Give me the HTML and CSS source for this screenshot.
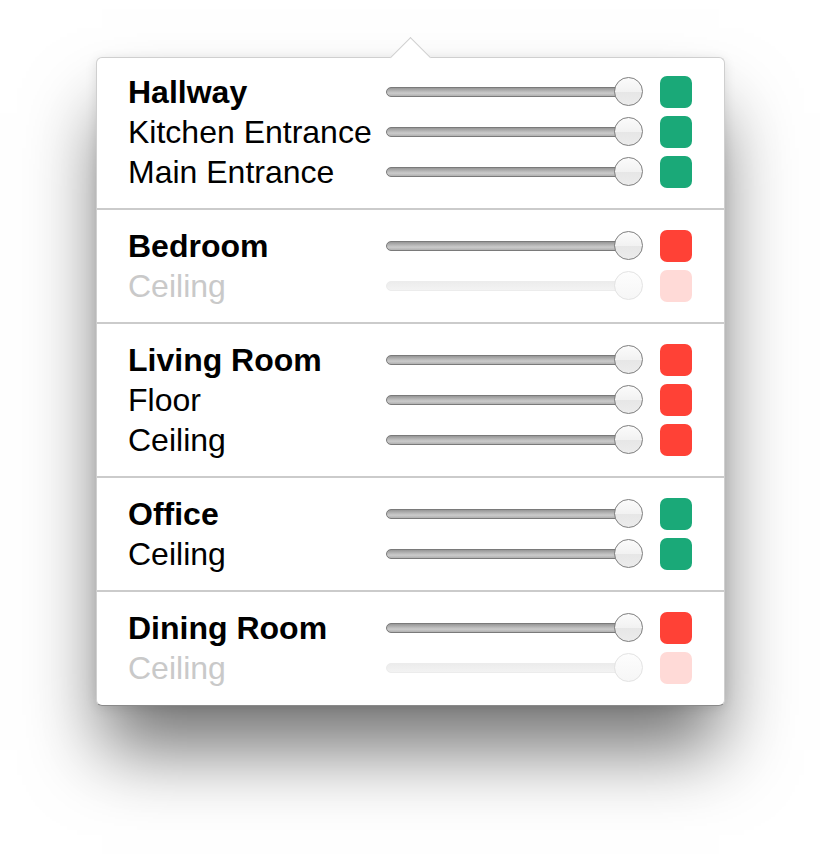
FILE: index.html
```html
<!DOCTYPE html>
<html>
<head>
<meta charset="utf-8">
<link rel="stylesheet" href="styles.css">
</head>
<body>
<div class="popover">
  <div class="section top">
    <div class="row"><span class="label bold">Hallway</span><div class="slider"><div class="track"></div><div class="knob"></div></div><div class="swatch green"></div></div>
    <div class="row"><span class="label">Kitchen Entrance</span><div class="slider"><div class="track"></div><div class="knob"></div></div><div class="swatch green"></div></div>
    <div class="row"><span class="label">Main Entrance</span><div class="slider"><div class="track"></div><div class="knob"></div></div><div class="swatch green"></div></div>
  </div>
  <div class="section">
    <div class="row"><span class="label bold">Bedroom</span><div class="slider"><div class="track"></div><div class="knob"></div></div><div class="swatch red"></div></div>
    <div class="row disabled"><span class="label">Ceiling</span><div class="slider"><div class="track"></div><div class="knob"></div></div><div class="swatch red"></div></div>
  </div>
  <div class="section">
    <div class="row"><span class="label bold">Living Room</span><div class="slider"><div class="track"></div><div class="knob"></div></div><div class="swatch red"></div></div>
    <div class="row"><span class="label">Floor</span><div class="slider"><div class="track"></div><div class="knob"></div></div><div class="swatch red"></div></div>
    <div class="row"><span class="label">Ceiling</span><div class="slider"><div class="track"></div><div class="knob"></div></div><div class="swatch red"></div></div>
  </div>
  <div class="section">
    <div class="row"><span class="label bold">Office</span><div class="slider"><div class="track"></div><div class="knob"></div></div><div class="swatch green"></div></div>
    <div class="row"><span class="label">Ceiling</span><div class="slider"><div class="track"></div><div class="knob"></div></div><div class="swatch green"></div></div>
  </div>
  <div class="section bottom">
    <div class="row"><span class="label bold">Dining Room</span><div class="slider"><div class="track"></div><div class="knob"></div></div><div class="swatch red"></div></div>
    <div class="row disabled"><span class="label">Ceiling</span><div class="slider"><div class="track"></div><div class="knob"></div></div><div class="swatch red"></div></div>
  </div>
  <div class="arrow"></div>
</div>
</body>
</html>
```
FILE: styles.css
```css
html {
  margin: 0;
  padding: 0;
  background: #ffffff;
  height: 100%;
}
body {
  margin: 0;
  box-sizing: border-box;
  min-height: 855px;
  padding-top: 57px;
  padding-left: 96px;
  font-family: "Liberation Sans", Arial, Helvetica, sans-serif;
}
.popover {
  position: relative;
  width: 627px;
  background: #ffffff;
  border: 1px solid #cfcfcf;
  border-bottom-color: #8a8a8a;
  border-radius: 6px;
  box-shadow: 0 50px 70px -6px rgba(0, 0, 0, 0.55), 0 2px 12px rgba(0, 0, 0, 0.1);
}
.arrow {
  position: absolute;
  left: 299px;
  top: -15px;
  width: 28px;
  height: 28px;
  background: #ffffff;
  border-top: 1px solid #cfcfcf;
  border-left: 1px solid #cfcfcf;
  transform: rotate(45deg);
}
.section {
  padding: 16px 32px 16px 31px;
  border-top: 2px solid #cbcbcb;
}
.section.top {
  border-top: none;
  padding-top: 14px;
}
.section.bottom {
  padding-bottom: 17px;
}
.row {
  display: flex;
  align-items: center;
  height: 40px;
}
.label {
  width: 258px;
  font-size: 32px;
  color: #000000;
  white-space: nowrap;
}
.bold {
  font-weight: bold;
}
.slider {
  position: relative;
  width: 257px;
  height: 40px;
  display: flex;
  align-items: center;
}
.track {
  width: 252px;
  height: 8px;
  border-radius: 5px;
  border: 1px solid #7a7a7a;
  background: linear-gradient(#969696 0%, #b4b4b4 35%, #cbcbcb 65%, #b0b0b0 100%);
}
.knob {
  position: absolute;
  right: 0;
  top: 5px;
  width: 27px;
  height: 27px;
  border-radius: 50%;
  border: 1.5px solid #7e7e7e;
  background: linear-gradient(#fbfbfb 0%, #f2f2f2 50%, #e6e6e6 51%, #ececec 100%);
}
.swatch {
  margin-left: 17px;
  width: 32px;
  height: 32px;
  border-radius: 7px;
}
.green {
  background: #1aa978;
}
.red {
  background: #ff4136;
}
.disabled .label {
  color: #c9c9c9;
}
.disabled .track {
  border-color: #ececec;
  background: linear-gradient(#ececec, #f3f3f3);
}
.disabled .knob {
  border-color: #e3e3e3;
  background: linear-gradient(#fdfdfd, #f6f6f6);
}
.disabled .red {
  background: #ffdad7;
}
```
